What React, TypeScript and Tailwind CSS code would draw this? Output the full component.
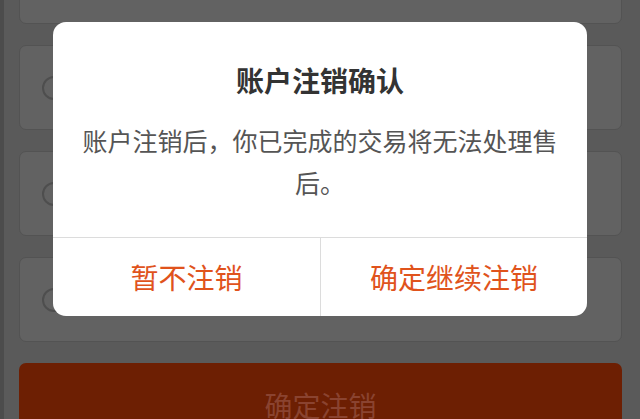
export default function App() {
  const cards = [false, true, true, true];

  return (
    <div
      className="relative h-[419px] w-[640px] overflow-hidden bg-[#5a5a5a]"
      style={{ fontFamily: '"Noto Sans CJK SC", "Noto Sans", sans-serif' }}
    >
      {/* Dimmed page underneath */}
      <div className="flex h-full border-l-[4px] border-[#4c4c4c]">
        <div className="-mt-[61px] flex flex-1 flex-col gap-[21px] pl-[15px] pr-[18px]">
          {cards.map((radio, i) => (
            <div
              key={i}
              className="flex h-[85px] shrink-0 items-center rounded-[7px] border border-[#535353] bg-[#626262] pl-[22px]"
            >
              {radio && <div className="h-[24px] w-[24px] rounded-full border-2 border-[#4e4e4e]" />}
            </div>
          ))}
          <div className="flex h-[70px] shrink-0 items-start justify-center rounded-[7px] bg-[#6d1f03] pt-[22px]">
            <span className="text-[28px] leading-[40px] text-[#8a4330]">确定注销</span>
          </div>
        </div>
      </div>

      {/* Confirm dialog */}
      <div className="absolute left-[53px] top-[22px] flex h-[294px] w-[534px] flex-col overflow-hidden rounded-[13px] bg-white">
        <div className="flex h-[215px] flex-col items-center px-[26px] pt-[38px] text-center">
          <h2 className="text-[28px] font-bold leading-[40px] text-[#333333]">账户注销确认</h2>
          <p className="mt-[19px] text-[25px] leading-[42px] text-[#555555]">
            账户注销后，你已完成的交易将无法处理售后。
          </p>
        </div>
        <div className="grid flex-1 grid-cols-2 border-t border-[#dcdcdc]">
          <button className="flex items-center justify-center text-[28px] text-[#e0531c]">暂不注销</button>
          <button className="flex items-center justify-center border-l border-[#dcdcdc] text-[28px] text-[#e0531c]">
            确定继续注销
          </button>
        </div>
      </div>
    </div>
  );
}
